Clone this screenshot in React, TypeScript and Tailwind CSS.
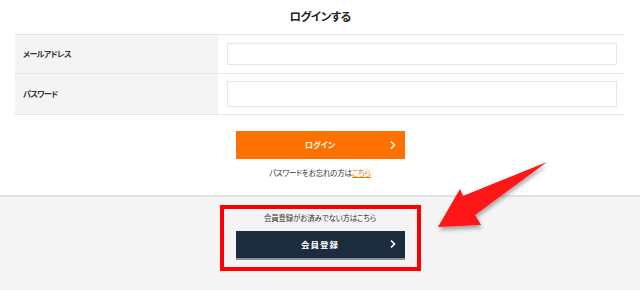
function Chevron() {
  return (
    <svg className="absolute right-[9px] top-1/2 -translate-y-1/2" width="6" height="9" viewBox="0 0 6 9">
      <polyline points="1,1 4.5,4.5 1,8" fill="none" stroke="#fff" strokeWidth="1.6" />
    </svg>
  );
}

export default function App() {
  const font = { fontFamily: '"Noto Sans CJK JP", "Noto Sans", sans-serif' };
  return (
    <div className="relative h-[290px] w-[640px] overflow-hidden bg-[#f4f4f4] text-[#333] [font-feature-settings:'palt']" style={font}>
      <div className="border-b-2 border-[#e2e2e2] bg-white pb-[17px]">
        <h1 className="flex h-[34px] items-center justify-center text-[11.5px] font-bold tracking-[-0.5px] text-[#222]">ログインする</h1>
        <div className="mx-[15px] border-t border-[#e6e6e6]">
          <div className="flex h-[39px] border-b border-[#e6e6e6]">
            <div className="flex w-[203px] items-center bg-[#f4f4f4] pl-[8px] text-[8px] font-bold tracking-[-0.6px]">メールアドレス</div>
            <div className="flex flex-1 items-center pl-[9px] pr-[8px]">
              <div className="h-[22px] w-full border border-[#e6e6e6]" />
            </div>
          </div>
          <div className="flex h-[41px] border-b border-[#e6e6e6]">
            <div className="flex w-[203px] items-center bg-[#f4f4f4] pl-[8px] text-[8px] font-bold tracking-[-0.6px]">パスワード</div>
            <div className="flex flex-1 items-center pl-[9px] pr-[8px]">
              <div className="h-[26px] w-full border border-[#e6e6e6]" />
            </div>
          </div>
        </div>
        <div className="mt-[16px] flex flex-col items-center">
          <button className="relative flex h-[28px] w-[169px] items-center justify-center bg-[#ff7200] text-[8px] font-bold text-white">
            ログイン
            <Chevron />
          </button>
          <p className="mt-[8px] text-[7.5px] tracking-[-0.2px] text-[#333]">
            パスワードをお忘れの方は<span className="text-[#ff7200] underline">こちら</span>
          </p>
        </div>
      </div>
      <div className="flex justify-center pt-[8px]">
        <div className="flex h-[66px] w-[201px] flex-col items-center border-4 border-[#ff0000] pt-[3px]">
          <p className="text-[7.5px] tracking-[-0.2px] text-[#333]">会員登録がお済みでない方はこちら</p>
          <button className="relative mt-[7px] flex h-[29px] w-[169px] shrink-0 items-center justify-center border-b-2 border-[#8a919a] bg-[#1c2b3e] text-[8.5px] font-bold tracking-[1px] text-white">
            会員登録
            <Chevron />
          </button>
        </div>
      </div>
      <svg className="pointer-events-none absolute left-0 top-0" width="640" height="290">
        <defs>
          <filter id="sh" x="-20%" y="-20%" width="140%" height="140%">
            <feDropShadow dx="1" dy="3" stdDeviation="2" floodColor="#000" floodOpacity="0.35" />
          </filter>
        </defs>
        <polygon
          points="438,227 460,189 463,196 547,162 475,215 481,225"
          fill="#ff1212"
          filter="url(#sh)"
        />
      </svg>
    </div>
  );
}
